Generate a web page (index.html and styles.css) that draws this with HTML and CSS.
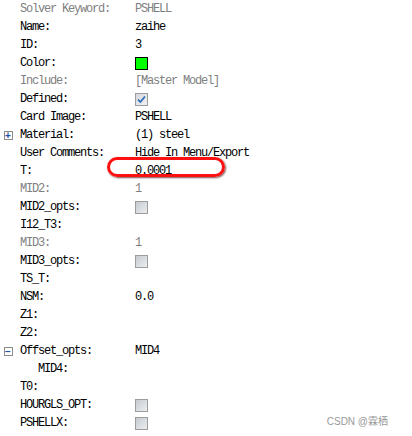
FILE: index.html
```html
<!DOCTYPE html>
<html lang="en">

<head>
  <meta charset="UTF-8">
  <title>PSHELL</title>
  <link rel="stylesheet" href="styles.css">
</head>

<body>
  <div class="props">
    <div class="row"><span class="tog"></span><span class="label off">Solver Keyword:</span><span class="value off">PSHELL</span></div>
    <div class="row"><span class="tog"></span><span class="label">Name:</span><span class="value">zaihe</span></div>
    <div class="row"><span class="tog"></span><span class="label">ID:</span><span class="value">3</span></div>
    <div class="row"><span class="tog"></span><span class="label">Color:</span><span class="value"><span class="swatch"></span></span></div>
    <div class="row"><span class="tog"></span><span class="label off">Include:</span><span class="value off">[Master Model]</span></div>
    <div class="row"><span class="tog"></span><span class="label">Defined:</span><span class="value"><span class="check checked">
      <svg width="11" height="11" viewBox="0 0 11 11"><path d="M2 5.5 L4.3 8 L9 2.5" fill="none" stroke="#2a6db5" stroke-width="1.8"/></svg>
    </span></span></div>
    <div class="row"><span class="tog"></span><span class="label">Card Image:</span><span class="value">PSHELL</span></div>
    <div class="row"><span class="tog"><span class="pm">+</span></span><span class="label">Material:</span><span class="value">(1) steel</span></div>
    <div class="row"><span class="tog"></span><span class="label">User Comments:</span><span class="value">Hide In Menu/Export</span></div>
    <div class="row"><span class="tog"></span><span class="label">T:</span><span class="value">0.0001</span>
      <span class="mark"></span>
    </div>
    <div class="row"><span class="tog"></span><span class="label off">MID2:</span><span class="value off">1</span></div>
    <div class="row"><span class="tog"></span><span class="label">MID2_opts:</span><span class="value"><span class="check"></span></span></div>
    <div class="row"><span class="tog"></span><span class="label">I12_T3:</span><span class="value"></span></div>
    <div class="row"><span class="tog"></span><span class="label off">MID3:</span><span class="value off">1</span></div>
    <div class="row"><span class="tog"></span><span class="label">MID3_opts:</span><span class="value"><span class="check"></span></span></div>
    <div class="row"><span class="tog"></span><span class="label">TS_T:</span><span class="value"></span></div>
    <div class="row"><span class="tog"></span><span class="label">NSM:</span><span class="value">0.0</span></div>
    <div class="row"><span class="tog"></span><span class="label">Z1:</span><span class="value"></span></div>
    <div class="row"><span class="tog"></span><span class="label">Z2:</span><span class="value"></span></div>
    <div class="row"><span class="tog"><span class="pm">&minus;</span></span><span class="label">Offset_opts:</span><span class="value">MID4</span></div>
    <div class="row"><span class="tog"></span><span class="label sub">MID4:</span><span class="value"></span></div>
    <div class="row"><span class="tog"></span><span class="label">T0:</span><span class="value"></span></div>
    <div class="row"><span class="tog"></span><span class="label">HOURGLS_OPT:</span><span class="value"><span class="check"></span></span></div>
    <div class="row"><span class="tog"></span><span class="label">PSHELLX:</span><span class="value"><span class="check"></span></span></div>
  </div>

  <div class="watermark">CSDN @霖栖</div>
</body>

</html>
```

FILE: styles.css
```css
body {
  margin: 0;
  background: #fff;
  width: 412px;
  height: 436px;
  overflow: hidden;
  position: relative;
}

.props {
  font-family: "Liberation Mono", "DejaVu Sans Mono", monospace;
  font-size: 12px;
  letter-spacing: -1.2px;
  color: #000;
}

.row {
  position: relative;
  height: 18px;
  display: grid;
  grid-template-columns: 20px 115px 1fr;
  align-items: center;
}

.tog {
  display: flex;
  align-items: center;
  justify-content: center;
}

.pm {
  width: 7px;
  height: 7px;
  border: 1px solid #8c8c8c;
  background: #fff;
  color: #1f4fa6;
  font-family: "Liberation Sans", Arial, sans-serif;
  font-size: 10px;
  font-weight: bold;
  line-height: 7px;
  letter-spacing: 0;
  text-align: center;
  margin-right: 4px;
}

.label.sub {
  padding-left: 18px;
}

.off {
  color: #808080;
}

.swatch {
  display: block;
  width: 11px;
  height: 11px;
  background: #00ff00;
  border: 1px solid #000;
}

.check {
  display: flex;
  align-items: center;
  justify-content: center;
  width: 11px;
  height: 11px;
  border: 1px solid #9c9c9c;
  background: linear-gradient(135deg, #c6cad0 0%, #eceef0 100%);
}

.check.checked {
  background: linear-gradient(135deg, #d5d8dc 0%, #f2f3f5 100%);
}

.mark {
  position: absolute;
  left: 107px;
  top: -5px;
  width: 112px;
  height: 14px;
  border: 3px solid #ff1010;
  border-radius: 10px;
  box-shadow: 1px 1px 2px rgba(70, 0, 0, 0.7);
}

.watermark {
  position: absolute;
  right: 24px;
  bottom: 8px;
  font-family: "Liberation Sans", "Noto Sans CJK SC", sans-serif;
  font-size: 10px;
  color: #9a9a9a;
}
```
